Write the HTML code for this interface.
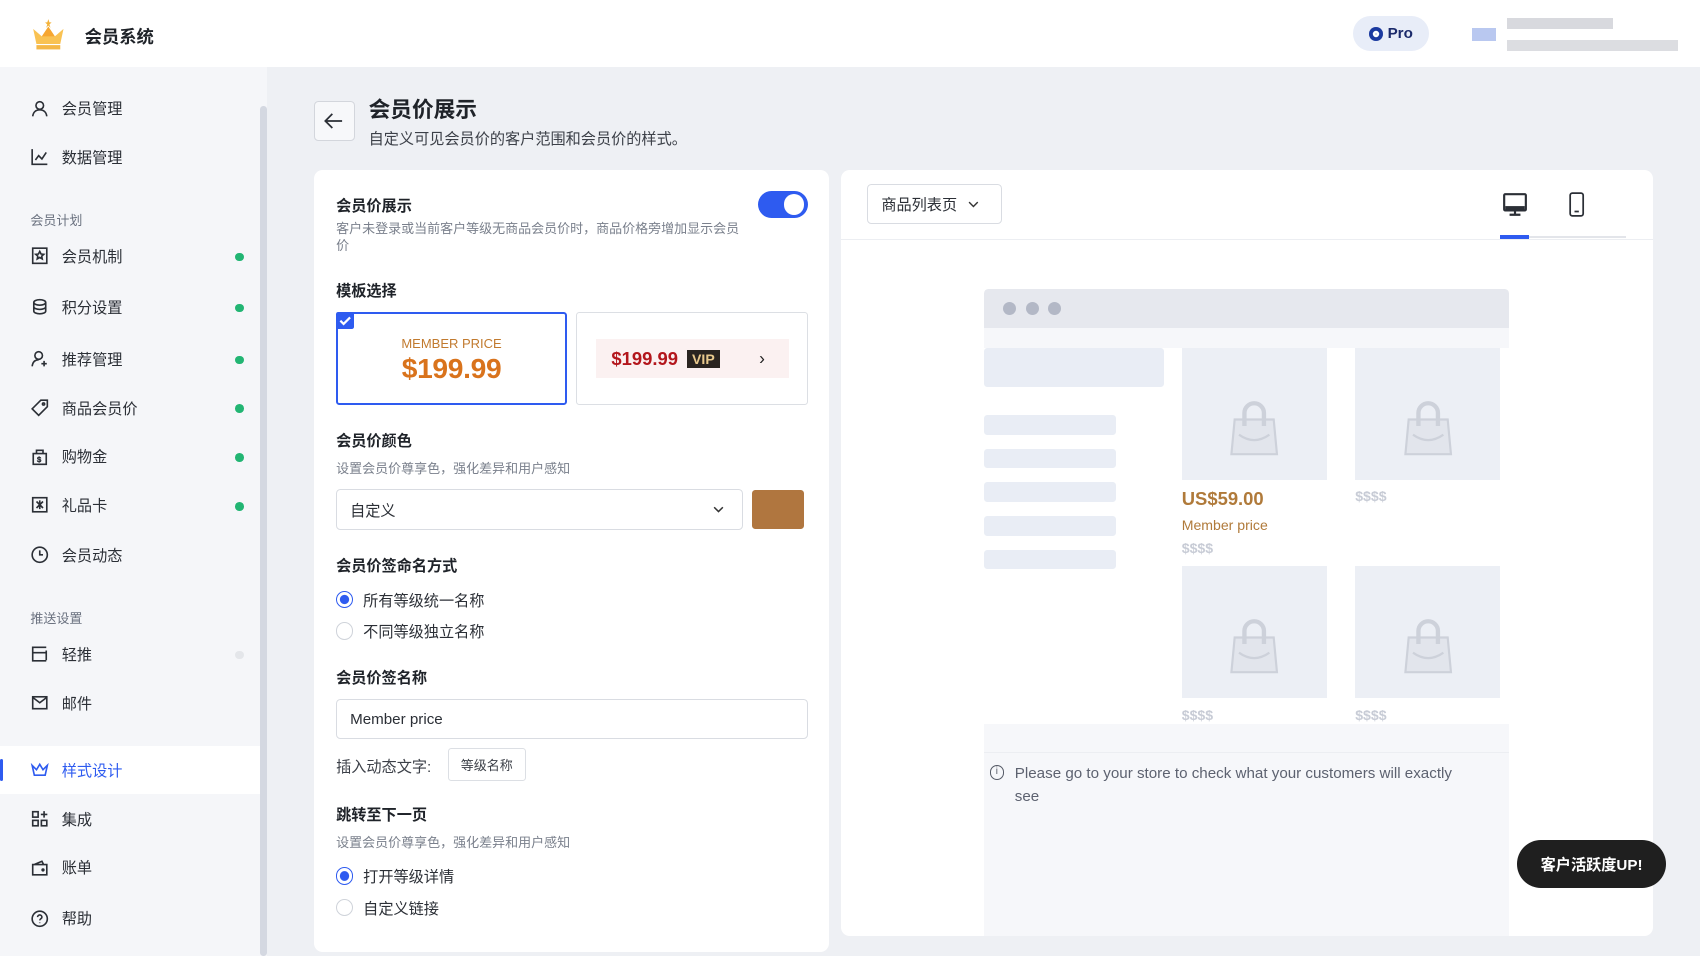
<!DOCTYPE html>
<html><head><meta charset="utf-8"><style>
*{box-sizing:border-box;margin:0;padding:0}
html,body{width:1700px;height:956px;overflow:hidden;background:#eef0f4}
body{font-family:"Liberation Sans","Noto Sans CJK SC",sans-serif;color:#1f2329}
#w{position:absolute;left:0;top:0;width:1568px;height:882px;zoom:1.08418;background:#eef0f4}
.a{position:absolute}
.hdr{left:0;top:0;width:1568px;height:62px;background:#fff}
.side{left:0;top:62px;width:246px;height:820px;background:#f5f6f9}
.sb{left:240px;top:98px;width:6px;height:784px;background:#d4d8e1;border-radius:3px}
.it{position:absolute;left:28px;font-size:14px;color:#2b2f36;display:flex;align-items:center;height:20px}
.it svg{width:18px;height:18px;margin-right:11px;fill:none;stroke:#2b2f36;stroke-width:1.5}
.sec{position:absolute;left:28px;font-size:12px;color:#6b7280}
.dot{position:absolute;left:217px;width:8px;height:8px;border-radius:50%;background:#22b573}
.card{background:#fff;border-radius:8px}
.lbl{position:absolute;left:20px;font-size:14px;font-weight:bold;color:#1f2329}
.hint{position:absolute;left:20px;font-size:12px;color:#7a808c;line-height:16px}
.radio{position:absolute;left:20px;font-size:14px;color:#2b2f36;display:flex;align-items:center}
.radio i{width:16px;height:16px;border-radius:50%;border:1.5px solid #cfd3da;margin-right:9px;display:inline-block}
.radio i.on{border:1.5px solid #2e5bf0;background:radial-gradient(#2e5bf0 0 4px,#fff 4.5px)}
.inp{position:absolute;left:20px;border:1px solid #d9dce2;border-radius:4px;font-size:14px;color:#2b2f36;padding-left:12px;display:flex;align-items:center}
.sk{position:absolute;background:#e9edf5;border-radius:3px}
.pimg{position:absolute;background:#eceff5;width:134px;height:122px}
.pimg svg{position:absolute;left:41px;top:48px}
.dl{position:absolute;color:#c8ccd6;font-weight:bold;font-size:13px}
</style></head><body><div id="w">
<div class="a hdr">
 <svg class="a" style="left:29px;top:17px" width="32" height="30" viewBox="0 0 32 30"><path d="M16 1l1 3h2l-2 2 1 3-2-2-2 2 1-3-2-2h2z" fill="#f3b23a"/><path d="M2 10l8 7 6-9 6 9 8-7-3 14H5z" fill="#f9c253"/><path d="M10 17l6-9 6 9z" fill="#f6a631"/><rect x="5" y="25" width="22" height="4" fill="#f4b748"/></svg>
 <div class="a" style="left:78px;top:21px;font-size:16px;font-weight:bold">会员系统</div>
 <div class="a" style="left:1248px;top:15px;width:70px;height:32px;border-radius:16px;background:#e8edf8;display:flex;align-items:center;justify-content:center;font-size:14px;color:#1b2a6b;font-weight:bold"><span style="display:inline-block;width:13px;height:13px;border-radius:50%;background:#1b3aa0;margin-right:4px;box-shadow:inset 0 0 0 3.5px #1b3aa0,inset 0 0 0 6px #fff"></span>Pro</div>
 <div class="a" style="left:1358px;top:26px;width:22px;height:12px;background:#b9c8f0"></div>
 <div class="a" style="left:1390px;top:17px;width:98px;height:10px;background:#d8d9de"></div>
 <div class="a" style="left:1390px;top:37px;width:158px;height:10px;background:#dcdde1"></div>
</div>
<div class="a side"></div><div class="a sb"></div>
<div class="it" style="top:90px"><svg viewBox="0 0 18 18"><circle cx="9" cy="6" r="3.5"/><path d="M2.5 16c.5-4 3-6 6.5-6s6 2 6.5 6"/></svg>会员管理</div>
<div class="it" style="top:135px"><svg viewBox="0 0 18 18"><path d="M2 2v14h14M5 12l3-4 3 3 4-6"/></svg>数据管理</div>
<div class="sec" style="top:194px">会员计划</div>
<div class="it" style="top:226px"><svg viewBox="0 0 18 18"><rect x="2.5" y="2" width="13" height="14"/><path d="M9 5l1.2 2.4 2.5.3-1.9 1.7.5 2.5L9 10.6l-2.3 1.3.5-2.5L5.3 7.7l2.5-.3z"/></svg>会员机制</div><div class="dot" style="top:233px"></div>
<div class="it" style="top:273px"><svg viewBox="0 0 18 18"><ellipse cx="9" cy="5" rx="5.5" ry="2.5"/><path d="M3.5 5v8c0 1.4 2.5 2.5 5.5 2.5s5.5-1.1 5.5-2.5V5M3.5 9c0 1.4 2.5 2.5 5.5 2.5s5.5-1.1 5.5-2.5"/></svg>积分设置</div><div class="dot" style="top:280px"></div>
<div class="it" style="top:321px"><svg viewBox="0 0 18 18"><circle cx="8" cy="6" r="3.5"/><path d="M2 16c.5-4 2.5-6 6-6M13 11v5M10.5 13.5h5"/></svg>推荐管理</div><div class="dot" style="top:328px"></div>
<div class="it" style="top:366px"><svg viewBox="0 0 18 18"><path d="M10 2h6v6l-8 8-6-6z"/><circle cx="12.5" cy="5.5" r="1"/></svg>商品会员价</div><div class="dot" style="top:373px"></div>
<div class="it" style="top:411px"><svg viewBox="0 0 18 18"><path d="M3 6h12v10H3zM6 6V3h6v3"/><text x="6.5" y="14" font-size="7" stroke-width=".5" fill="#2b2f36">$</text></svg>购物金</div><div class="dot" style="top:418px"></div>
<div class="it" style="top:456px"><svg viewBox="0 0 18 18"><rect x="2.5" y="2.5" width="13" height="13"/><path d="M6 6l6 6M12 6l-6 6M9 5v8"/></svg>礼品卡</div><div class="dot" style="top:463px"></div>
<div class="it" style="top:502px"><svg viewBox="0 0 18 18"><circle cx="9" cy="9" r="7"/><path d="M9 5v4h3"/></svg>会员动态</div>
<div class="sec" style="top:561px">推送设置</div>
<div class="it" style="top:593px"><svg viewBox="0 0 18 18"><path d="M15 3H2.5v12.5H15M2.5 8H15M15 6v9"/></svg>轻推</div><div class="dot" style="top:600px;background:#e4e6ea"></div>
<div class="it" style="top:638px"><svg viewBox="0 0 18 18"><rect x="2.5" y="3.5" width="13" height="11"/><path d="M2.5 4l6.5 5 6.5-5"/></svg>邮件</div>
<div class="a" style="left:0;top:688px;width:240px;height:44px;background:#fff"></div>
<div class="a" style="left:0;top:700px;width:3px;height:20px;background:#2e5bf0;border-radius:2px"></div>
<div class="it" style="top:700px;color:#2e5bf0"><svg viewBox="0 0 18 18" style="stroke:#2e5bf0"><path d="M2 5l4 4 3-5 3 5 4-4-2 9H4z"/></svg>样式设计</div>
<div class="it" style="top:745px"><svg viewBox="0 0 18 18"><rect x="2.5" y="2.5" width="5" height="5"/><rect x="2.5" y="10.5" width="5" height="5"/><rect x="10.5" y="10.5" width="5" height="5"/><path d="M13 2v6M10 5h6"/></svg>集成</div>
<div class="it" style="top:790px"><svg viewBox="0 0 18 18"><path d="M2.5 6h13v9.5h-13zM4 6l7-3 1.5 3"/><circle cx="12" cy="11" r=".8"/></svg>账单</div>
<div class="it" style="top:837px"><svg viewBox="0 0 18 18"><circle cx="9" cy="9" r="7"/><path d="M7 7.5c0-1.2 1-2 2-2s2 .8 2 2c0 1.5-2 1.5-2 3M9 12.5v.5"/></svg>帮助</div>

<div class="a" style="left:290px;top:93px;width:37px;height:37px;border:1px solid #d3d6dc;border-radius:4px;background:#f7f8fa"><svg width="35" height="35" viewBox="0 0 35 35"><path d="M25 17.5H10M16 11l-6.5 6.5L16 24" fill="none" stroke="#2b2f36" stroke-width="1.6"/></svg></div>
<div class="a" style="left:340px;top:86px;font-size:20px;font-weight:bold">会员价展示</div>
<div class="a" style="left:340px;top:117px;font-size:14px;color:#3c4048">自定义可见会员价的客户范围和会员价的样式。</div>

<div class="a card" style="left:290px;top:157px;width:475px;height:721px">
 <div class="lbl" style="top:22px">会员价展示</div>
 <div class="hint" style="top:46px;width:375px">客户未登录或当前客户等级无商品会员价时，商品价格旁增加显示会员价</div>
 <div class="a" style="left:409px;top:19px;width:46px;height:25px;border-radius:13px;background:#2e5bf0"><div class="a" style="left:24px;top:3px;width:19px;height:19px;border-radius:50%;background:#fff"></div></div>
 <div class="lbl" style="top:100px">模板选择</div>
 <div class="a" style="left:20px;top:131px;width:213px;height:86px;border:2px solid #2e5bf0;border-radius:3px;text-align:center">
  <div class="a" style="left:-2px;top:-2px;width:17px;height:16px;background:#2e5bf0;border-radius:2px"><svg width="17" height="16"><path d="M4 8l3 3 6-6" stroke="#fff" stroke-width="2" fill="none"/></svg></div>
  <div style="margin-top:20px;font-size:12px;color:#c17a2e">MEMBER PRICE</div>
  <div style="font-size:26px;font-weight:bold;color:#d9731c;margin-top:1px;letter-spacing:-0.3px">$199.99</div>
 </div>
 <div class="a" style="left:241px;top:131px;width:214px;height:86px;border:1px solid #dcdfe4;border-radius:3px">
  <div class="a" style="left:18px;top:24px;width:178px;height:36px;background:#fbf1f1;display:flex;align-items:center;padding-left:14px">
   <span style="font-size:17px;font-weight:bold;color:#b3161c">$199.99</span>
   <span style="margin-left:8px;background:#2a2420;color:#e9c98d;font-size:13px;font-weight:bold;padding:1px 5px">VIP</span>
   <span style="margin-left:36px;font-size:16px;color:#222">›</span>
  </div>
 </div>
 <div class="lbl" style="top:239px">会员价颜色</div>
 <div class="hint" style="top:267px">设置会员价尊享色，强化差异和用户感知</div>
 <div class="inp" style="top:294px;width:375px;height:38px">自定义<svg class="a" style="left:346px;top:13px" width="12" height="10"><path d="M2 3l4 4 4-4" stroke="#333" stroke-width="1.4" fill="none"/></svg></div>
 <div class="a" style="left:404px;top:295px;width:48px;height:36px;background:#b0763f;border-radius:3px"></div>
 <div class="lbl" style="top:354px">会员价签命名方式</div>
 <div class="radio" style="top:386px"><i class="on"></i>所有等级统一名称</div>
 <div class="radio" style="top:415px"><i></i>不同等级独立名称</div>
 <div class="lbl" style="top:457px">会员价签名称</div>
 <div class="inp" style="top:488px;width:435px;height:37px">Member price</div>
 <div class="a" style="left:20px;top:539px;font-size:14px;color:#3c4048">插入动态文字:</div>
 <div class="a" style="left:123px;top:533px;width:72px;height:30px;border:1px solid #dcdfe4;border-radius:3px;font-size:12px;color:#3c4048;display:flex;align-items:center;justify-content:center">等级名称</div>
 <div class="lbl" style="top:584px">跳转至下一页</div>
 <div class="hint" style="top:612px">设置会员价尊享色，强化差异和用户感知</div>
 <div class="radio" style="top:641px"><i class="on"></i>打开等级详情</div>
 <div class="radio" style="top:670px"><i></i>自定义链接</div>
</div>

<div class="a card" style="left:776px;top:157px;width:749px;height:706px">
 <div class="a" style="left:24px;top:13px;width:124px;height:37px;border:1px solid #d9dce2;border-radius:4px;font-size:14px;color:#2b2f36;display:flex;align-items:center;padding-left:12px">商品列表页<svg style="margin-left:10px" width="10" height="8"><path d="M1 2l4 4 4-4" stroke="#333" stroke-width="1.3" fill="none"/></svg></div>
 <svg class="a" style="left:609px;top:20px" width="24" height="24" viewBox="0 0 24 24"><rect x="2" y="2" width="20" height="15" rx="1" fill="none" stroke="#2b2f36" stroke-width="2"/><rect x="3" y="13" width="18" height="4" fill="#2b2f36"/><path d="M12 17v4M7 21h10" stroke="#2b2f36" stroke-width="2"/></svg>
 <svg class="a" style="left:670px;top:20px" width="16" height="24" viewBox="0 0 16 24"><rect x="2" y="1" width="12" height="21" rx="2" fill="none" stroke="#2b2f36" stroke-width="1.6"/><path d="M6 18h4" stroke="#2b2f36" stroke-width="1.6"/></svg>
 <div class="a" style="left:0;top:63px;width:749px;height:1px;background:#eceef2"></div>
 <div class="a" style="left:634px;top:61px;width:90px;height:2px;background:#e3e5ea"></div>
 <div class="a" style="left:608px;top:60px;width:26px;height:3px;background:#2e5bf0"></div>
 <div class="a" style="left:132px;top:110px;width:484px;height:36px;background:#e6e8ee;border-radius:4px 4px 0 0"></div>
 <div class="a" style="left:149px;top:122px;width:12px;height:12px;border-radius:50%;background:#b3b8c6"></div>
 <div class="a" style="left:170px;top:122px;width:12px;height:12px;border-radius:50%;background:#b3b8c6"></div>
 <div class="a" style="left:191px;top:122px;width:12px;height:12px;border-radius:50%;background:#b3b8c6"></div>
 <div class="a" style="left:132px;top:146px;width:484px;height:18px;background:#f6f7fa"></div>
 <div class="sk" style="left:132px;top:164px;width:166px;height:36px"></div>
 <div class="sk" style="left:132px;top:226px;width:121px;height:18px"></div>
 <div class="sk" style="left:132px;top:257px;width:121px;height:18px"></div>
 <div class="sk" style="left:132px;top:288px;width:121px;height:18px"></div>
 <div class="sk" style="left:132px;top:319px;width:121px;height:18px"></div>
 <div class="sk" style="left:132px;top:350px;width:121px;height:18px"></div>
 <div class="pimg" style="left:314px;top:164px"><svg width="52" height="52" viewBox="0 0 52 52"><path d="M8 18h36l3 32H5z" fill="#e2e5ec" stroke="#cdd1da" stroke-width="2"/><path d="M17 24V12a9 9 0 0118 0v12" fill="none" stroke="#cdd1da" stroke-width="4"/><path d="M12 32q14 10 28 0" fill="none" stroke="#cdd1da" stroke-width="2"/></svg></div>
 <div class="pimg" style="left:474px;top:164px"><svg width="52" height="52" viewBox="0 0 52 52"><path d="M8 18h36l3 32H5z" fill="#e2e5ec" stroke="#cdd1da" stroke-width="2"/><path d="M17 24V12a9 9 0 0118 0v12" fill="none" stroke="#cdd1da" stroke-width="4"/><path d="M12 32q14 10 28 0" fill="none" stroke="#cdd1da" stroke-width="2"/></svg></div>
 <div class="a" style="left:314px;top:293px;font-size:17px;font-weight:bold;color:#b07a3a">US$59.00</div>
 <div class="a" style="left:314px;top:320px;font-size:13px;color:#b07a3a">Member price</div>
 <div class="dl" style="left:314px;top:341px">$$$$</div>
 <div class="dl" style="left:474px;top:293px">$$$$</div>
 <div class="pimg" style="left:314px;top:365px"><svg width="52" height="52" viewBox="0 0 52 52"><path d="M8 18h36l3 32H5z" fill="#e2e5ec" stroke="#cdd1da" stroke-width="2"/><path d="M17 24V12a9 9 0 0118 0v12" fill="none" stroke="#cdd1da" stroke-width="4"/><path d="M12 32q14 10 28 0" fill="none" stroke="#cdd1da" stroke-width="2"/></svg></div>
 <div class="pimg" style="left:474px;top:365px"><svg width="52" height="52" viewBox="0 0 52 52"><path d="M8 18h36l3 32H5z" fill="#e2e5ec" stroke="#cdd1da" stroke-width="2"/><path d="M17 24V12a9 9 0 0118 0v12" fill="none" stroke="#cdd1da" stroke-width="4"/><path d="M12 32q14 10 28 0" fill="none" stroke="#cdd1da" stroke-width="2"/></svg></div>
 <div class="dl" style="left:314px;top:495px">$$$$</div>
 <div class="dl" style="left:474px;top:495px">$$$$</div>
 <div class="a" style="left:132px;top:511px;width:484px;height:195px;background:#f6f7fa"></div>
 <div class="a" style="left:132px;top:537px;width:484px;height:1px;background:#eceef2"></div>
 <div class="a" style="left:137px;top:549px;width:13px;height:13px;border:1.3px solid #555a66;border-radius:50%;font-size:9px;line-height:11px;text-align:center;color:#555a66">i</div>
 <div class="a" style="left:160px;top:547px;width:415px;font-size:14px;line-height:21px;color:#5d6270">Please go to your store to check what your customers will exactly see</div>
</div>
<div class="a" style="left:1399px;top:775px;width:138px;height:44px;border-radius:22px;background:#1f1f1f;color:#fff;font-size:14px;font-weight:bold;display:flex;align-items:center;justify-content:center">客户活跃度UP!</div>
</div></body></html>
